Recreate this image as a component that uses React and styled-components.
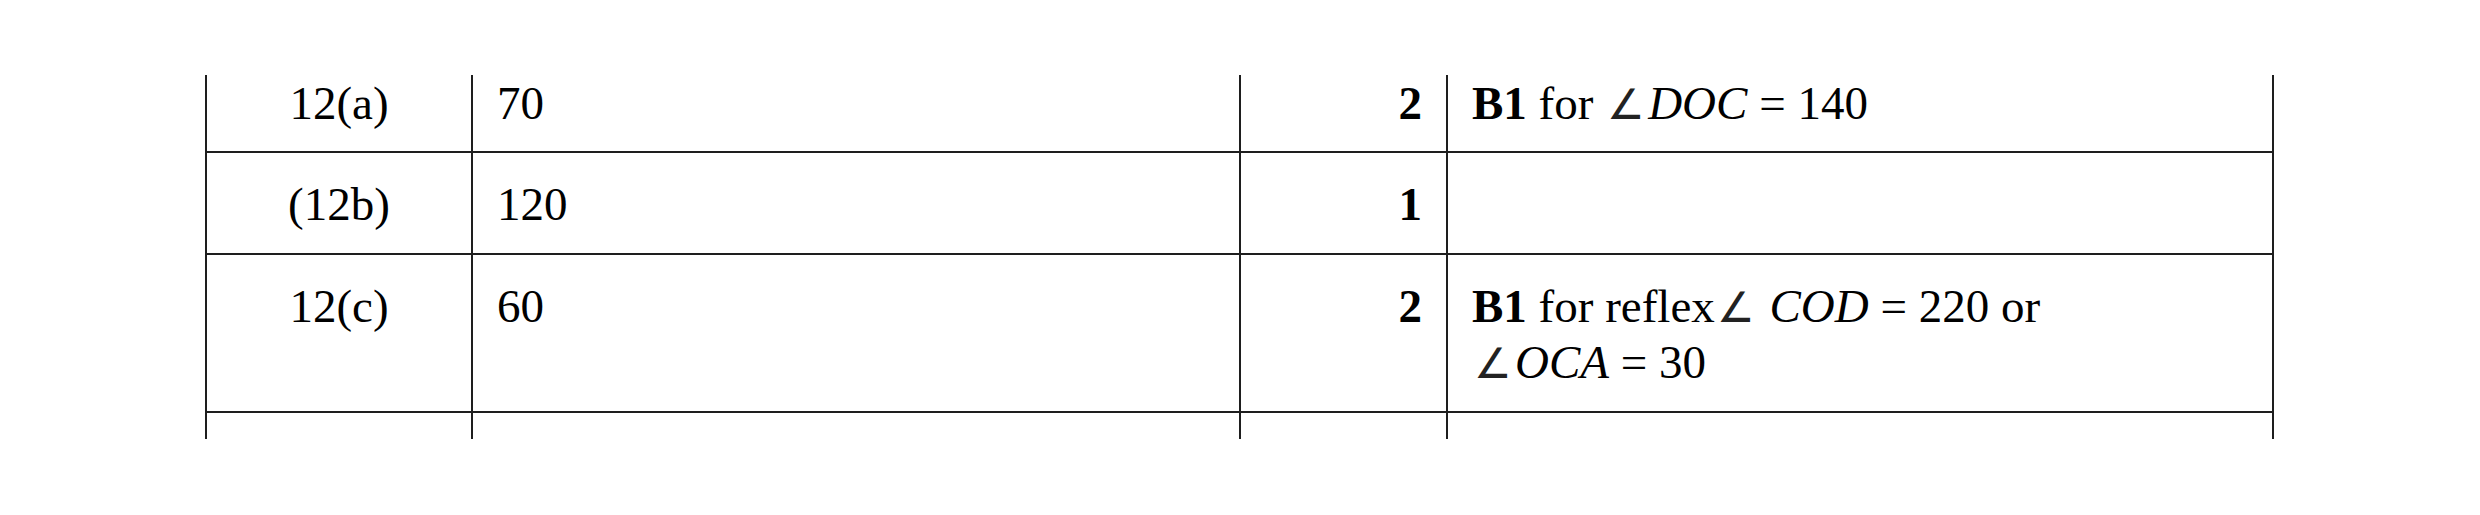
import React from "react";
import styled, { createGlobalStyle } from "styled-components";

const GlobalStyle = createGlobalStyle`
  html, body { margin: 0; padding: 0; background: #ffffff; }
`;

const Page = styled.div`
  padding-top: 75px;
  padding-left: 205px;
  font-family: "Liberation Serif", "Times New Roman", serif;
  font-size: 47px;
  line-height: 55px;
  color: #000;
`;

const Table = styled.div`
  width: 2069px;
  border-left: 2px solid #1e1e1e;
  box-sizing: border-box;
`;

const Row = styled.div`
  display: grid;
  grid-template-columns: 266px 768px 207px 826px;
  height: ${(p) => p.$h}px;
  box-sizing: border-box;
  border-bottom: ${(p) => (p.$last ? "none" : "2px solid #1e1e1e")};
`;

const Cell = styled.div`
  box-sizing: border-box;
  border-right: 2px solid #1e1e1e;
  padding: ${(p) => p.$pt}px 24px 0 24px;
  text-align: ${(p) => p.$align || "left"};
  font-weight: ${(p) => (p.$bold ? 700 : 400)};
  white-space: nowrap;
`;

const B = styled.b`
  font-weight: 700;
`;

const I = styled.i`
  font-style: italic;
`;

const Angle = styled.span`
  font-family: "DejaVu Sans", sans-serif;
  font-weight: 200;
  font-size: 42px;
  color: #222;
  display: inline-block;
  margin: 0 3px 0 2px;
`;

const rows = [
  {
    h: 78,
    pt: 1,
    q: "12(a)",
    a: "70",
    m: "2",
    c: (
      <>
        <B>B1</B> for <Angle>∠</Angle>
        <I>DOC</I> = 140
      </>
    ),
  },
  { h: 102, pt: 24, q: "(12b)", a: "120", m: "1", c: null },
  {
    h: 158,
    pt: 24,
    q: "12(c)",
    a: "60",
    m: "2",
    c: (
      <>
        <B>B1</B> for reflex<Angle>∠</Angle> <I>COD</I> = 220 or
        <br />
        <Angle>∠</Angle>
        <I>OCA</I> = 30
      </>
    ),
  },
  { h: 26, pt: 0, q: "", a: "", m: "", c: null, last: true },
];

export default function App() {
  return (
    <>
      <GlobalStyle />
      <Page>
        <Table>
          {rows.map((r, i) => (
            <Row key={i} $h={r.h} $last={r.last}>
              <Cell $pt={r.pt} $align="center">{r.q}</Cell>
              <Cell $pt={r.pt}>{r.a}</Cell>
              <Cell $pt={r.pt} $align="right" $bold>{r.m}</Cell>
              <Cell $pt={r.pt}>{r.c}</Cell>
            </Row>
          ))}
        </Table>
      </Page>
    </>
  );
}
